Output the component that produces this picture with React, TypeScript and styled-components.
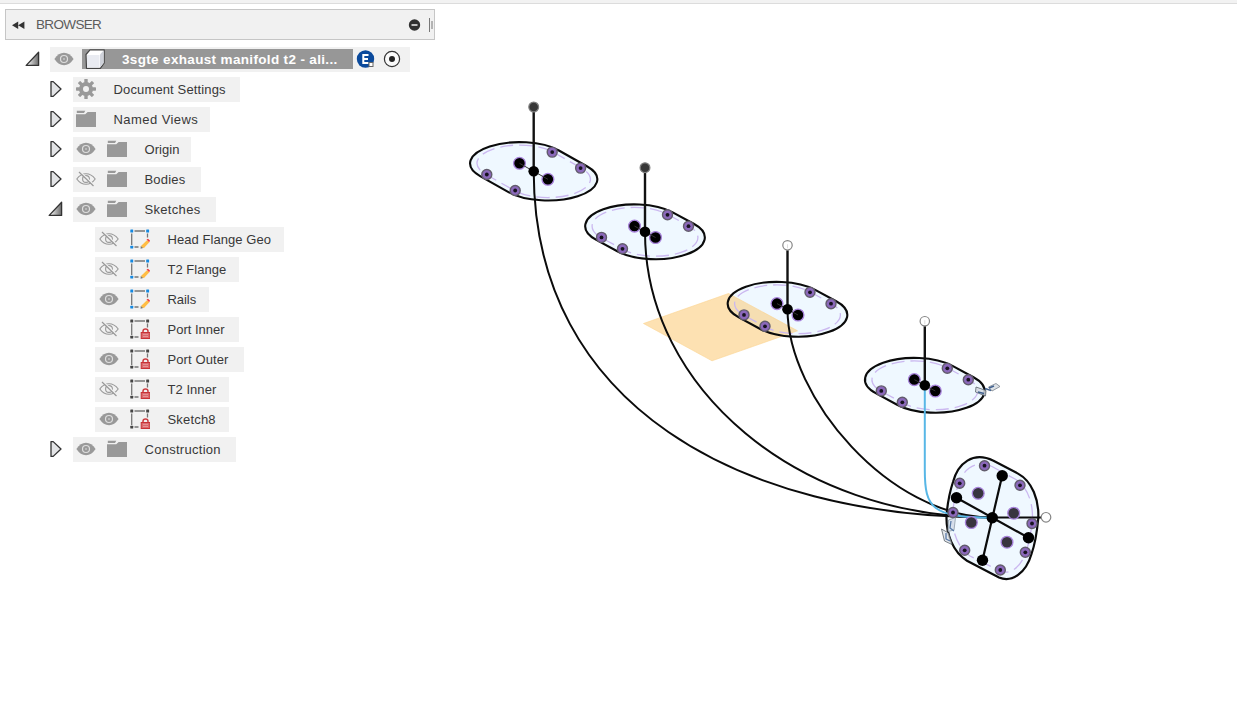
import React from "react";
import styled, { createGlobalStyle } from "styled-components";

const GlobalStyle = createGlobalStyle`
  body { margin: 0; background: #fff; overflow: hidden; font-family: "Liberation Sans", Arial, sans-serif; }
  svg { display: block; flex: none; }
`;

const Page = styled.div`
  width: 1237px;
  height: 712px;
  display: flex;
  flex-direction: column;
  overflow: hidden;
`;
const TopStrip = styled.div`
  height: 3px;
  flex: none;
  background: #f2f2f2;
  border-bottom: 1px solid #dcdcdc;
`;
const Workspace = styled.div`
  display: flex;
  flex: 1;
  min-height: 0;
`;
const Browser = styled.aside`
  width: 440px;
  flex: none;
  padding-top: 5px;
`;
const PanelHeader = styled.header`
  box-sizing: border-box;
  width: 430px;
  height: 31px;
  margin-left: 5px;
  padding: 0 0 0 6px;
  display: flex;
  align-items: center;
  background: #f1f1f1;
  border: 1px solid #c6c6c6;
`;
const PanelTitle = styled.h1`
  flex: 1;
  margin: -1px 0 0 11px;
  font-size: 13.5px;
  font-weight: 400;
  letter-spacing: -0.65px;
  color: #5c5c5c;
`;
const Tree = styled.div`
  padding-top: 4px;
`;
const Row = styled.div<{ $indent: number }>`
  height: 30px;
  padding-left: ${(p) => p.$indent}px;
  display: flex;
  align-items: center;
`;
const Chip = styled.div<{ $width: number; $pad?: number }>`
  box-sizing: border-box;
  width: ${(p) => p.$width}px;
  height: 25px;
  padding-left: ${(p) => p.$pad ?? 3}px;
  display: flex;
  align-items: center;
  gap: 11px;
  background: #f1f1f1;
`;
const Label = styled.span<{ $spacing: number }>`
  margin-left: 6.5px;
  padding-top: 1px;
  font-size: 13px;
  line-height: 20px;
  letter-spacing: ${(p) => p.$spacing}px;
  white-space: nowrap;
  color: #383838;
`;
const Twisty = styled.div<{ $gap: number }>`
  width: 16px;
  margin-right: ${(p) => p.$gap}px;
`;
const Selected = styled.div`
  box-sizing: border-box;
  width: 271px;
  height: 20px;
  margin-left: -3px;
  padding-left: 3px;
  display: flex;
  align-items: center;
  background: #979797;
`;
const RootName = styled.span`
  margin-left: 17px;
  font-size: 13.5px;
  font-weight: 700;
  letter-spacing: 0.34px;
  white-space: nowrap;
  color: #fff;
`;
const Badges = styled.div`
  display: flex;
  align-items: center;
  gap: 8px;
  margin-left: -8px;
`;

const OpenArrow = () => (
  <svg width="16" height="18" viewBox="0 0 16 18">
    <defs>
      <linearGradient id="fold" x1="0" x2="1">
        <stop offset="0.2" stopColor="#e4e4e4" />
        <stop offset="1" stopColor="#6c6c6c" />
      </linearGradient>
    </defs>
    <path d="M14.6 2.2V15.4H2.2Z" fill="url(#fold)" stroke="#333" strokeWidth="1.3" strokeLinejoin="round" />
  </svg>
);
const ClosedArrow = () => (
  <svg width="16" height="18" viewBox="0 0 16 18">
    <path d="M4 1.6H6.2L14 9L6.2 16.4H4Z" fill="#e3e4e6" stroke="#333" strokeWidth="1.3" strokeLinejoin="round" />
  </svg>
);
const Eye = () => (
  <svg width="20" height="20" viewBox="0 0 20 20">
    <path d="M.4 10Q4.5 3.8 10 3.8T19.6 10Q15.5 16.2 10 16.2T.4 10Z" fill="#999" />
    <circle cx="10" cy="10" r="3.5" fill="none" stroke="#dedede" strokeWidth="1.2" />
    <circle cx="10" cy="10" r="1" fill="#c4c4c4" />
  </svg>
);
const EyeOff = () => (
  <svg width="20" height="20" viewBox="0 0 20 20" fill="none" stroke="#999" strokeWidth="1.1">
    <path d="M.8 10Q4.6 4.7 10 4.7T19.2 10Q15.4 15.3 10 15.3T.8 10Z" />
    <circle cx="10" cy="10" r="3.4" />
    <path d="M4 2.6L18 16" stroke="#f1f1f1" strokeWidth="1.5" />
    <path d="M3 3L17.5 17" strokeWidth="1.2" />
  </svg>
);
const Folder = () => (
  <svg width="20" height="20" viewBox="0 0 20 20" fill="#999">
    <path d="M.8 1.7H9.3L8 3.9H.8Z" />
    <path d="M0 5.2H9.2L11.7 2.9H20.3V18H0Z" />
  </svg>
);
const Gear = () => (
  <svg width="20" height="20" viewBox="0 0 20 20">
    <g fill="#999">
      {[0, 45, 90, 135].map((a) => (
        <rect key={a} x="8.3" y="0" width="3.4" height="20" rx="0.6" transform={`rotate(${a} 10 10)`} />
      ))}
      <circle cx="10" cy="10" r="7" />
    </g>
    <circle cx="10" cy="10" r="3" fill="#f1f1f1" />
  </svg>
);
const Cube = () => (
  <svg width="20" height="20" viewBox="0 0 20 20">
    <path d="M1 5.5L5 .8H19.2V14L15.3 19.3H1.5Z" fill="#fff" stroke="#444" strokeWidth="1.2" strokeLinejoin="round" />
    <path d="M2 6H14.5V18.5H2Z" fill="#e9ebf1" />
    <path d="M15 5.6L18.6 1.5V14L15 18.6Z" fill="#cfd2da" />
  </svg>
);
const SketchIcon = ({ locked }: { locked: boolean }) => {
  const dot = locked ? "#444" : "#1588e0";
  return (
    <svg width="20" height="20" viewBox="0 0 20 20">
      <path d="M4.5 2H15M1.7 4.5V16M17.5 4.5V8.5M4.500 18H8.500" stroke="#777" strokeWidth="1.3" />
      <g fill={dot}>
        <rect x="0.3" y="0.5" width="2.9" height="2.9" rx="0.5" />
        <rect x="16.2" y="0.5" width="2.9" height="2.9" rx="0.5" />
        <rect x="0.3" y="16.7" width="2.9" height="2.9" rx="0.5" />
      </g>
      {locked ? (
        <g>
          <path d="M13 14V12.2Q13 10 15.5 10T18 12.2V14" fill="none" stroke="#cc3c40" strokeWidth="1.5" />
          <rect x="11.2" y="13.5" width="8.7" height="6" fill="#d9686b" stroke="#c83236" />
          <path d="M13 15.4H18M13 17.5H18" stroke="#eaa0a2" strokeWidth="0.8" />
        </g>
      ) : (
        <g>
          <path d="M17 11.2L19.3 13.3L14 19L11.3 18.6L11.2 16.7Z" fill="#ffbd45" />
          <path d="M16.5 10.6L18 9.7L20 11.6L19.2 13.2Z" fill="#f04040" />
          <path d="M10.7 17L13.2 19L10.6 19.7Z" fill="#777" />
        </g>
      )}
    </svg>
  );
};

type Item = {
  name: string;
  level: 1 | 2;
  width: number;
  kind: "settings" | "folder" | "sketch" | "locked";
  visible?: boolean;
  open?: boolean;
  spacing: number;
};
const items: Item[] = [
  { name: "Document Settings", level: 1, width: 167, kind: "settings", spacing: 0.14 },
  { name: "Named Views", level: 1, width: 137, kind: "folder", spacing: 0.44 },
  { name: "Origin", level: 1, width: 118, kind: "folder", visible: true, spacing: 0.05 },
  { name: "Bodies", level: 1, width: 128, kind: "folder", visible: false, spacing: 0.2 },
  { name: "Sketches", level: 1, width: 143, kind: "folder", visible: true, open: true, spacing: 0.32 },
  { name: "Head Flange Geo", level: 2, width: 189, kind: "sketch", visible: false, spacing: 0.06 },
  { name: "T2 Flange", level: 2, width: 144, kind: "sketch", visible: false, spacing: 0.02 },
  { name: "Rails", level: 2, width: 114, kind: "sketch", visible: true, spacing: -0.05 },
  { name: "Port Inner", level: 2, width: 144, kind: "locked", visible: false, spacing: 0 },
  { name: "Port Outer", level: 2, width: 149, kind: "locked", visible: true, spacing: 0.1 },
  { name: "T2 Inner", level: 2, width: 134, kind: "locked", visible: false, spacing: 0.05 },
  { name: "Sketch8", level: 2, width: 134, kind: "locked", visible: true, spacing: 0.18 },
  { name: "Construction", level: 1, width: 163, kind: "folder", visible: true, spacing: 0.28 },
];

const TreeItem = ({ item }: { item: Item }) => (
  <Row $indent={item.level === 1 ? 47 : 95}>
    {item.level === 1 && <Twisty $gap={10}>{item.open ? <OpenArrow /> : <ClosedArrow />}</Twisty>}
    <Chip $width={item.width} $pad={item.level === 1 ? 3 : 4}>
      {item.visible !== undefined && (item.visible ? <Eye /> : <EyeOff />)}
      {item.kind === "settings" && <Gear />}
      {item.kind === "folder" && <Folder />}
      {item.kind === "sketch" && <SketchIcon locked={false} />}
      {item.kind === "locked" && <SketchIcon locked />}
      <Label $spacing={item.spacing}>{item.name}</Label>
    </Chip>
  </Row>
);

const PurplePoint = ({ x, y }: { x: number; y: number }) => (
  <g>
    <circle cx={x} cy={y} r="5" fill="#8b68bb" stroke="#625c6c" strokeWidth="1.4" />
    <circle cx={x} cy={y} r="1.9" fill="#17121f" />
  </g>
);
const CorePoint = ({ x, y, soft }: { x: number; y: number; soft?: boolean }) => (
  <circle cx={x} cy={y} r="5.9" fill={soft ? "#38343f" : "#000"} stroke="#a883dc" strokeWidth="1.3" />
);

type PortProps = { x: number; y: number; dx: number; dy: number; rx: number; ry: number; tx: number; ty: number; px: number; py: number };

const slotPath = (p: PortProps, k: number) => {
  const ax = p.tx * k;
  const ay = p.ty * k;
  return `M${-p.dx + ax} ${-p.dy - ay}L${p.dx + ax} ${p.dy - ay}A${p.rx * k} ${p.ry * k} 0 0 1 ${p.dx - ax} ${p.dy + ay}L${-p.dx - ax} ${-p.dy + ay}A${p.rx * k} ${p.ry * k} 0 0 1 ${-p.dx + ax} ${-p.dy - ay}Z`;
};
const PortFill = (p: PortProps) => (
  <path transform={`translate(${p.x} ${p.y})`} d={slotPath(p, 1)} fill="#eff8ff" />
);
const PortOutline = (p: PortProps) => (
  <g transform={`translate(${p.x} ${p.y})`} fill="none">
    <path d={slotPath(p, 1)} stroke="#0b0b0b" strokeWidth="2.1" />
    <path d={slotPath(p, 0.86)} stroke="#cbb8f0" strokeWidth="1.3" strokeDasharray="13 6" />
  </g>
);
const PortPoints = (p: PortProps) => (
  <g transform={`translate(${p.x} ${p.y})`}>
    <PurplePoint x={-p.dx + p.px} y={-p.dy - p.py} />
    <PurplePoint x={p.dx + p.px} y={p.dy - p.py} />
    <PurplePoint x={-p.dx - p.px} y={-p.dy + p.py} />
    <PurplePoint x={p.dx - p.px} y={p.dy + p.py} />
    <CorePoint x={-p.dx} y={-p.dy} />
    <CorePoint x={p.dx} y={p.dy} />
    <path d={`M${-p.dx} ${-p.dy}L${p.dx} ${p.dy}`} stroke="#333" strokeWidth="1" />
    <circle r="5.3" fill="#000" />
  </g>
);

const small = { dx: 10.5, dy: 5.7, rx: 49.2, ry: 21.7, tx: 38.2, ty: 13.75, px: 33, py: 11.3 };
const ports: PortProps[] = [
  { x: 533.7, y: 171.3, dx: 14.2, dy: 8, rx: 49.4, ry: 21.2, tx: 39.4, ty: 12.8, px: 32.7, py: 11.2 },
  { x: 645, y: 231.8, ...small },
  { x: 787.5, y: 309.3, ...small },
  { x: 924.8, y: 385.3, ...small },
];
const handles = [
  { x: 533.7, y: 107, filled: true },
  { x: 645, y: 167.7, filled: true },
  { x: 787.5, y: 245.3, filled: false },
  { x: 924.8, y: 321.2, filled: false },
];
const rimPoints = [
  [984.5, 465.7], [1020, 485.3], [959.7, 483.3], [953, 512.5],
  [1032, 523.5], [1025.3, 552.3], [964.7, 550.3], [1000.3, 570],
];
const corePoints = [[978.2, 493.3], [1013.7, 513.2], [971.3, 522.5], [1007, 542.2]];
const axisPoints = [[1002.2, 475.7], [956.5, 497.7], [1028.5, 537.8], [982.5, 560.2]];

const FlatConstraint = () => (
  <g strokeLinejoin="round">
    <path d="M976 387L986 390.500L985.500 396L975.500 392Z" fill="#d5dbe2" fillOpacity=".85" stroke="#59626b" strokeWidth=".8" />
    <path d="M988.5 387L996 383.500L1000 386.500L992 391Z" fill="#dde2e7" stroke="#7b838b" strokeWidth=".8" />
    <path d="M978 392L984 393.500M985 388.500L991 390.500M989 388L994 386" stroke="#41618f" strokeWidth="1.4" />
  </g>
);
const UprightConstraint = () => (
  <g strokeLinejoin="round">
    <path d="M948.5 520L955.500 517.500L954 530L948 531.500Z" fill="#d5dfe9" fillOpacity=".85" stroke="#8b98a6" strokeWidth=".8" />
    <path d="M941.500 529L948.500 533L952 544.500L944.500 541Z" fill="#dde2e7" fillOpacity=".8" stroke="#59626b" strokeWidth=".8" />
    <path d="M951 521L950 528L954 531M946 533V539L950 541" fill="none" stroke="#5879a8" strokeWidth="1.3" />
  </g>
);

const Drawing = () => (
  <svg width="797" height="708" viewBox="440 4 797 708">
    {ports.map((p) => <PortFill key={p.x} {...p} />)}
    <path d="M643.5 323.5L728.5 293.5L797.5 330.8L712 360.8Z" fill="#fcc366" fillOpacity=".5" stroke="#fbd38f" strokeWidth=".6" />
    {ports.map((p) => <PortOutline key={p.x} {...p} />)}
    <path
      d="M993.5 460.7L1018 473.6C1032 481 1039.5 500 1038.2 519C1037 532 1035 544 1031.5 554C1026 573 1012 583 999 577.5L967 560.7C953 552 946 534 946.5 516C947.5 503 950 491 953 482C958 463 973 451 993.5 460.7Z"
      fill="#eff8ff" stroke="#0b0b0b" strokeWidth="2.2"
    />
    <path
      d="M992 466.5L1015 479C1027 486 1033 502 1032.5 519C1031 532 1029.5 542 1026.5 550C1022 566 1011 575.5 1000 571L970 556C958 548 952 532 952.5 516C953.5 504 955 493 958.5 484.5C963 469 976 459.5 992 466.5Z"
      fill="none" stroke="#cbb8f0" strokeWidth="1.3" strokeDasharray="13 6"
    />
    <g fill="none" stroke="#0b0b0b" strokeWidth="2">
      <path d="M533.7 171C533.7 405 740 517.5 992 517.5" />
      <path d="M645 232C645 388 797 517.5 992 517.5" />
      <path d="M787.5 309C787.5 398 890 517.5 992 517.5" />
    </g>
    <path d="M924.8 385V470C924.8 508 932 517.5 992 517.8" fill="none" stroke="#58b7e6" strokeWidth="2" />
    <path d="M1002.2 475.5L982.5 560.2M956.5 497.7L1028.5 537.8M992.3 517.5H1041" stroke="#0b0b0b" strokeWidth="2.2" />
    <FlatConstraint />
    <UprightConstraint />
    {handles.map((h, i) => (
      <g key={h.x}>
        <path d={`M${h.x} ${h.y + (h.filled ? 0 : 5)}V${ports[i].y}`} stroke="#111" strokeWidth="2.4" />
        <circle cx={h.x} cy={h.y} r={h.filled ? 4.9 : 4.7} fill={h.filled ? "#383838" : "#fff"} stroke={h.filled ? "#808080" : "#858585"} strokeWidth="1.2" />
        {!h.filled && <path d={`M${h.x} ${h.y - 1}V${h.y + 3}`} stroke="#ddd" />}
      </g>
    ))}
    <circle cx="1046" cy="517.3" r="4.8" fill="#fff" stroke="#858585" strokeWidth="1.2" />
    {ports.map((p) => <PortPoints key={p.x} {...p} />)}
    {rimPoints.map(([x, y]) => <PurplePoint key={x} x={x} y={y} />)}
    {corePoints.map(([x, y]) => <CorePoint key={x} x={x} y={y} soft />)}
    {axisPoints.map(([x, y]) => <circle key={x} cx={x} cy={y} r="5.7" fill="#000" />)}
    <circle cx="992.3" cy="517.7" r="5.7" fill="#000" />
  </svg>
);

export default function App() {
  return (
    <Page>
      <GlobalStyle />
      <TopStrip />
      <Workspace>
        <Browser>
          <PanelHeader>
            <svg width="13" height="10" viewBox="0 0 13 10" fill="#333">
              <path d="M6.2 1.5V9L0 5.2ZM12.4 1.5V9L6.2 5.2Z" />
            </svg>
            <PanelTitle>BROWSER</PanelTitle>
            <svg width="27" height="20" viewBox="0 0 27 20">
              <circle cx="7.5" cy="10" r="5.7" fill="#303030" />
              <path d="M4.5 10H10.5" stroke="#f1f1f1" strokeWidth="1.5" />
              <path d="M22.5 3V17M25 6V14" stroke="#777" strokeWidth="1" />
            </svg>
          </PanelHeader>
          <Tree>
            <Row $indent={24}>
              <Twisty $gap={10}><OpenArrow /></Twisty>
              <Chip $width={360} $pad={4}>
                <Eye />
                <Selected>
                  <Cube />
                  <RootName>3sgte exhaust manifold t2 - ali...</RootName>
                </Selected>
                <Badges>
                  <svg width="19" height="20" viewBox="0 0 19 20">
                    <circle cx="9.5" cy="10" r="8.7" fill="#0b4a9c" />
                    <path d="M12.5 6H7.3V14H12.5M7.5 10H12" fill="none" stroke="#fff" strokeWidth="2" />
                    <rect x="13" y="13.5" width="4" height="4" fill="#fff" stroke="#666" />
                  </svg>
                  <svg width="18" height="20" viewBox="0 0 18 20">
                    <circle cx="9" cy="10" r="7.6" fill="#fafafa" stroke="#333" strokeWidth="1.2" />
                    <circle cx="9" cy="10" r="3" fill="#222" />
                  </svg>
                </Badges>
              </Chip>
            </Row>
            {items.map((item) => <TreeItem key={item.name} item={item} />)}
          </Tree>
        </Browser>
        <Drawing />
      </Workspace>
    </Page>
  );
}
